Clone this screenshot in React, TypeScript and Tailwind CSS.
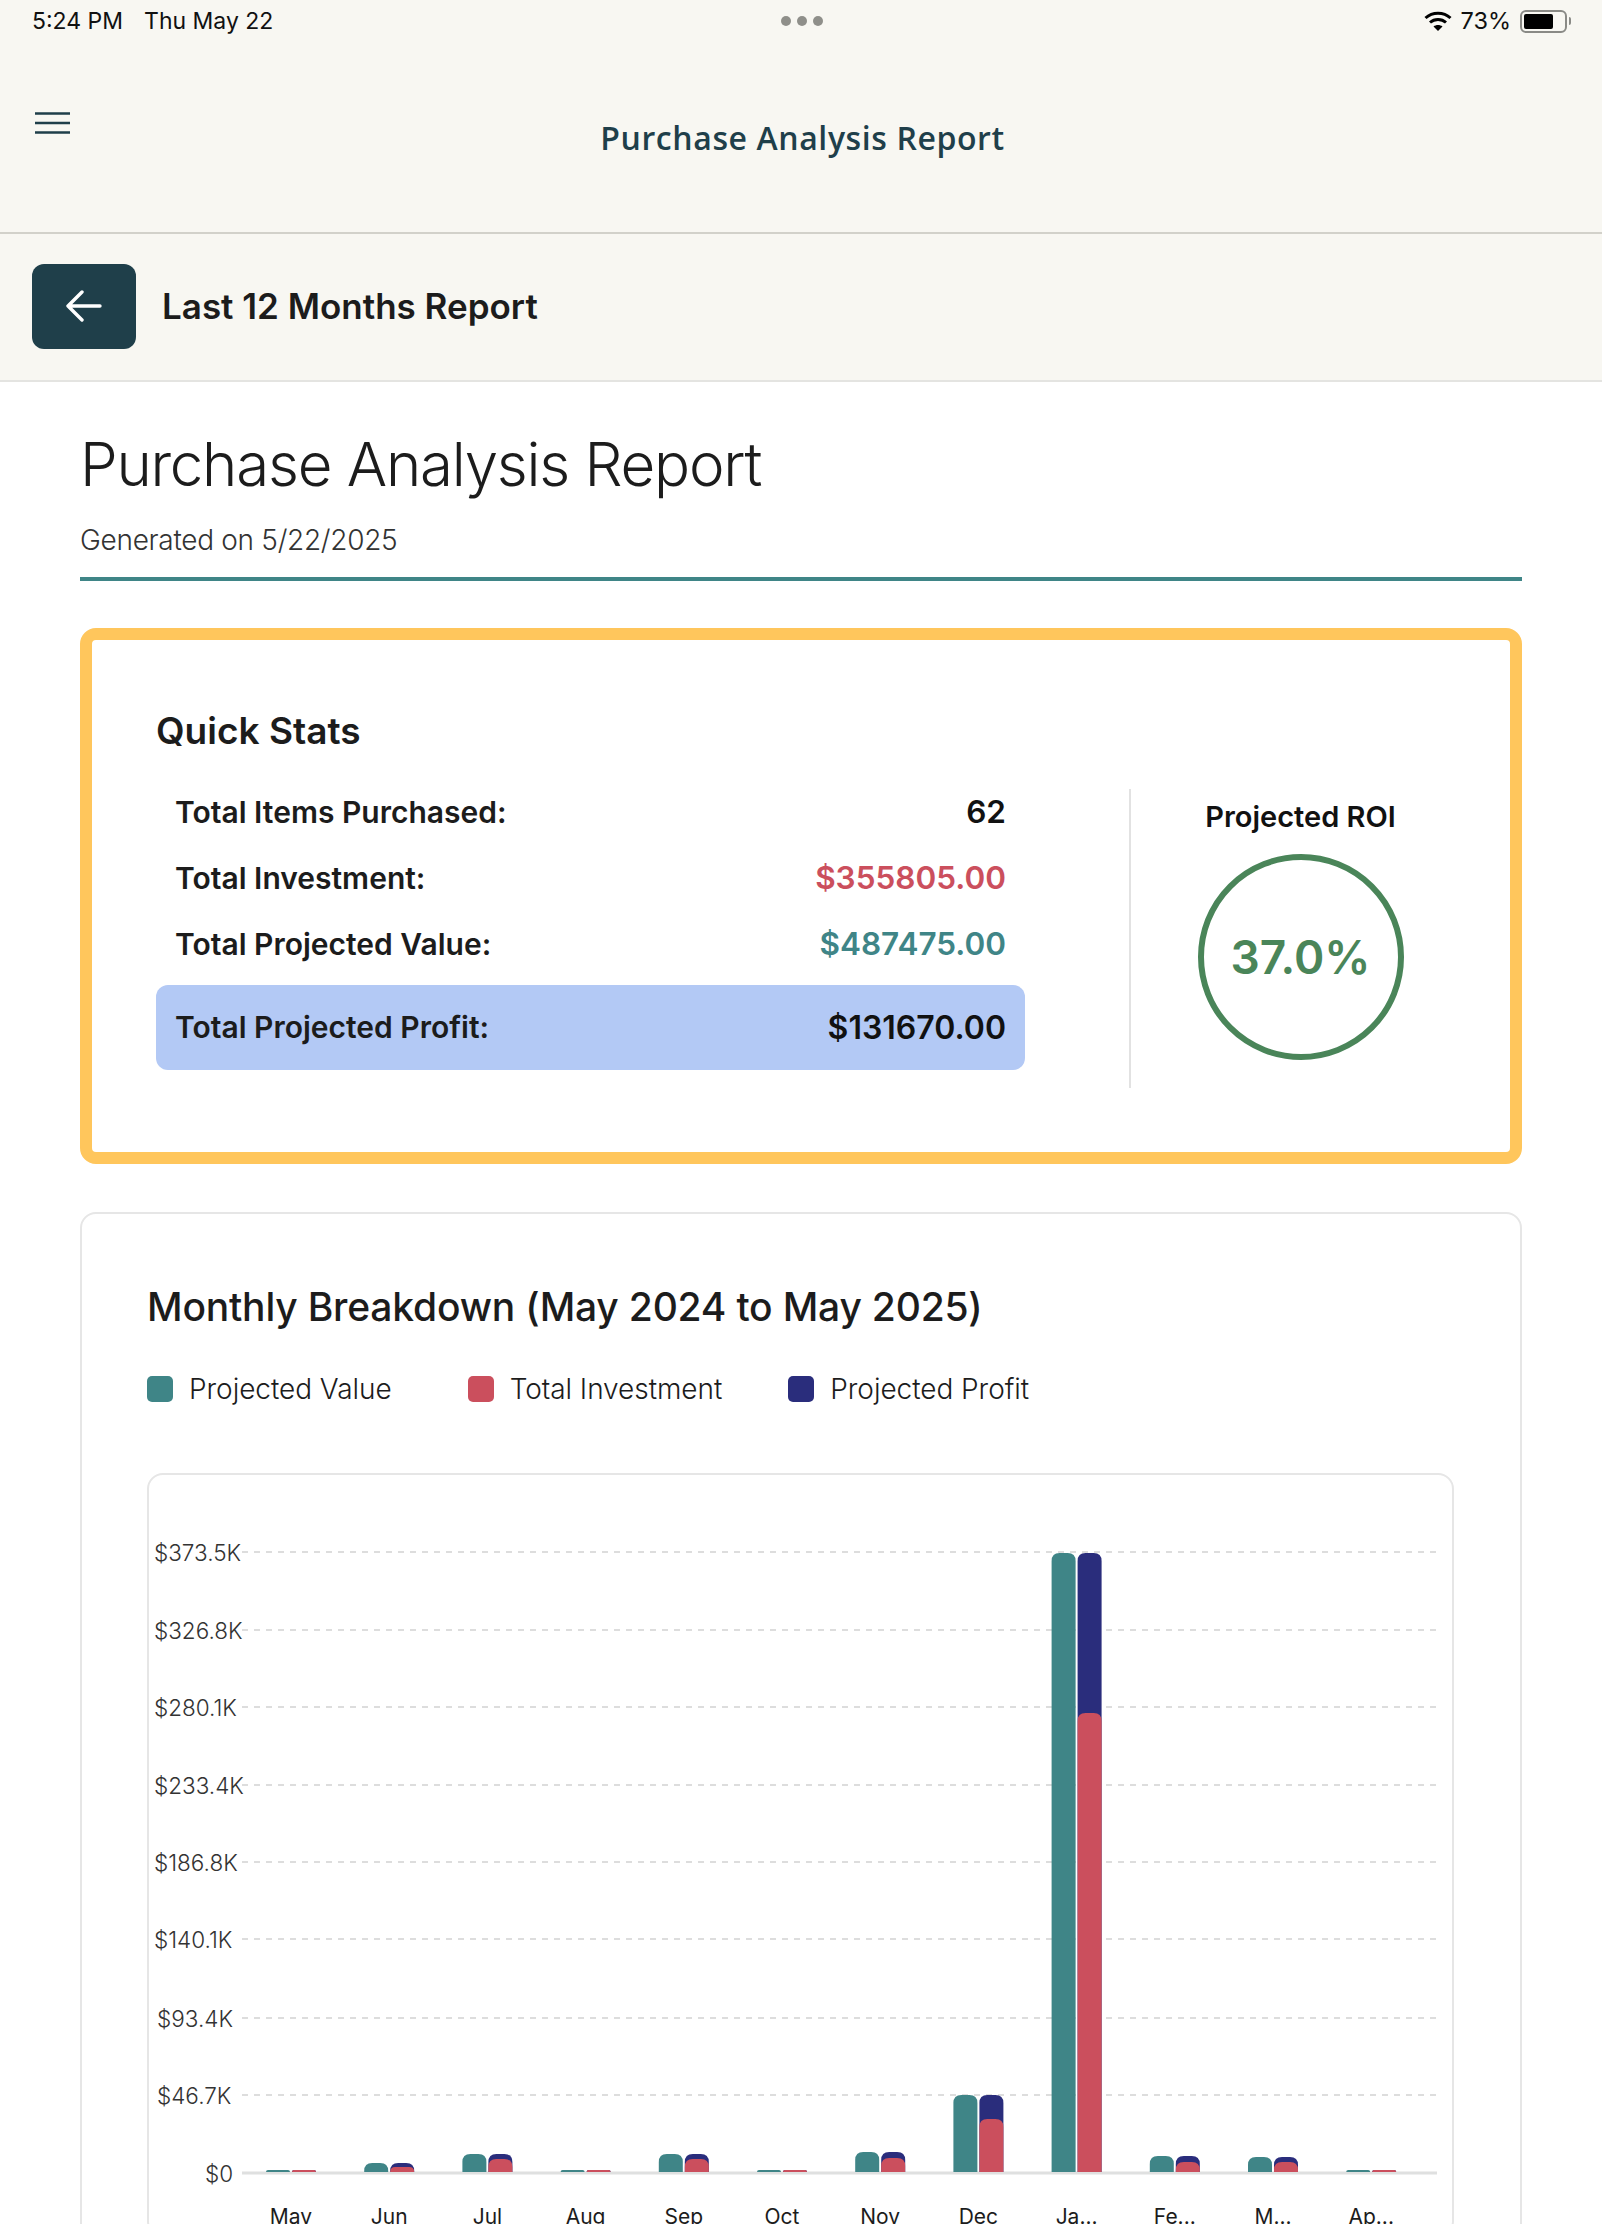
const TEAL = "#3f8587";
const RED = "#cb4f5d";
const NAVY = "#2a2d7c";

const ticks: [string, number, number][] = [
  ["$373.5K", 1552, 154],
  ["$326.8K", 1630, 154],
  ["$280.1K", 1707, 154],
  ["$233.4K", 1785, 154],
  ["$186.8K", 1862, 154],
  ["$140.1K", 1939, 154],
  ["$93.4K", 2018, 157],
  ["$46.7K", 2095, 157],
  ["$0", 2173, 205],
];

const months: { label: string; top: number; red: number }[] = [
  { label: "May", top: 2170, red: 2170 },
  { label: "Jun", top: 2163, red: 2167 },
  { label: "Jul", top: 2154, red: 2159 },
  { label: "Aug", top: 2170, red: 2170 },
  { label: "Sep", top: 2154, red: 2159 },
  { label: "Oct", top: 2170, red: 2170 },
  { label: "Nov", top: 2152, red: 2158 },
  { label: "Dec", top: 2095, red: 2119 },
  { label: "Ja...", top: 1553, red: 1713 },
  { label: "Fe...", top: 2156, red: 2162 },
  { label: "M...", top: 2157, red: 2162 },
  { label: "Ap...", top: 2170, red: 2170 },
];

const AXIS = 2172;

function barPath(x: number, top: number, w: number) {
  const h = AXIS - top;
  const r = Math.min(8, h);
  return `M${x} ${AXIS}V${top + r}Q${x} ${top} ${x + r} ${top}H${x + w - r}Q${x + w} ${top} ${x + w} ${top + r}V${AXIS}Z`;
}

function Chart() {
  return (
    <svg viewBox="149 1475 1303 760" className="block w-[1303px] h-[760px]">
      {ticks.slice(0, 8).map(([, y]) => (
        <line key={y} x1={242} x2={1437} y1={y} y2={y} stroke="#dddddd" strokeWidth={2} strokeDasharray="6 6" />
      ))}
      <line x1={242} x2={1437} y1={2173} y2={2173} stroke="#dfe0e0" strokeWidth={3} />
      {ticks.map(([t, y, x]) => (
        <text key={t} x={x} y={y + 9} fontSize={22.5} fill="#333333" fontFamily="Inter, sans-serif" fontWeight={300}>
          {t}
        </text>
      ))}
      {months.map((m, i) => {
        const c = 291 + 98.2 * i;
        return (
          <g key={m.label}>
            <path d={barPath(c - 25, m.top, 24)} fill={TEAL} />
            <path d={barPath(c + 1, m.top, 24)} fill={NAVY} />
            <path d={barPath(c + 1, m.red, 24)} fill={RED} />
            <text x={c} y={2224} fontSize={21} fill="#1c1c1c" textAnchor="middle" fontFamily="Inter, sans-serif">
              {m.label}
            </text>
          </g>
        );
      })}
    </svg>
  );
}

function Row({ label, value, color }: { label: string; value: string; color: string }) {
  return (
    <div className="flex h-[44px] items-center justify-between px-[19px]">
      <span className="text-[30px] font-semibold text-[#1c1c1c]">{label}</span>
      <span className={`text-[31.5px] font-semibold ${color}`}>{value}</span>
    </div>
  );
}

function Legend({ color, label, className }: { color: string; label: string; className?: string }) {
  return (
    <div className={`flex items-center gap-[16px] ${className ?? ""}`}>
      <span className={`h-[26px] w-[26px] rounded-[5px] ${color}`} />
      <span className="text-[28px] font-light tracking-[-0.05px] text-[#1c1c1c]">{label}</span>
    </div>
  );
}

export default function App() {
  return (
    <div className="h-[2224px] w-[1602px] overflow-hidden bg-white font-['Inter',sans-serif] text-[#1c1c1c]">
      <header className="h-[234px] border-b-2 border-[#d2d1ca] bg-[#f8f7f2]">
        <div className="grid h-[42px] grid-cols-3 items-center pl-[32px] pr-[31px]">
          <div className="flex gap-[21px] text-[23px] text-[#111111]">
            <span>5:24 PM</span>
            <span>Thu May 22</span>
          </div>
          <div className="flex justify-center gap-[6px]">
            <span className="h-[10px] w-[10px] rounded-full bg-[#8f8f8a]" />
            <span className="h-[10px] w-[10px] rounded-full bg-[#8f8f8a]" />
            <span className="h-[10px] w-[10px] rounded-full bg-[#8f8f8a]" />
          </div>
          <div className="flex items-center justify-end gap-[9px] text-[23.5px] text-[#111111]">
            <svg viewBox="0 0 28 20" className="h-[20px] w-[28px]" fill="none" stroke="#000000" strokeWidth={3}>
              <path d="M1.5 7C8.5 .5 19.5 .5 26.5 7" />
              <path d="M6 11.5C10.5 7.5 17.5 7.5 22 11.5" />
              <path d="M9.5 15.5 14 20l4.5-4.5C16 13.5 12 13.5 9.5 15.5Z" fill="#000000" stroke="none" />
            </svg>
            <span>73%</span>
            <div className="flex items-center gap-[2px]">
              <div className="flex h-[23px] w-[47px] items-center rounded-[6px] border-2 border-[#8a8a86] p-[2px]">
                <div className="h-full w-[29px] rounded-[2px] bg-black" />
              </div>
              <div className="h-[8px] w-[2px] rounded-r-full bg-[#8a8a86]" />
            </div>
          </div>
        </div>
        <div className="grid grid-cols-3 pl-[35px] pr-[32px]">
          <svg viewBox="0 0 35 22" className="mt-[70px] h-[22px] w-[35px]" stroke="#1f3f4a" strokeWidth={2.6}>
            <path d="M0 1.5H35M0 11H35M0 20.5H35" />
          </svg>
          <h1 className="mt-[73px] whitespace-nowrap text-center font-['Open_Sans',sans-serif] text-[32px] leading-[46px] font-semibold tracking-[0.6px] text-[#1f3f4a]">
            Purchase Analysis Report
          </h1>
        </div>
      </header>

      <div className="flex h-[148px] items-center gap-[26px] border-b-2 border-[#e4e4e1] bg-[#f8f7f2] pb-[2px] pl-[32px]">
        <button className="flex h-[85px] w-[104px] items-center justify-center rounded-[12px] bg-[#1f3f4a]">
          <svg viewBox="0 0 36 32" className="h-[32px] w-[36px]" fill="none" stroke="#ffffff" strokeWidth={3.4} strokeLinecap="round" strokeLinejoin="round">
            <path d="M34 16H2M16 2 2 16l14 14" />
          </svg>
        </button>
        <span className="text-[35px] font-semibold text-[#1c1c1c]">Last 12 Months Report</span>
      </div>

      <main className="px-[80px]">
        <div className="border-b-4 border-[#3f8587] pt-[46px] pb-[19px]">
          <h2 className="text-[60px] leading-[72px] font-light tracking-[-1.25px] text-[#1c1c1c]">Purchase Analysis Report</h2>
          <p className="mt-[22px] text-[28px] leading-[36px] font-light tracking-[-0.3px] text-[#333333]">Generated on 5/22/2025</p>
        </div>

        <section className="mt-[47px] h-[536px] rounded-[16px] border-[12px] border-[#ffc65c] pl-[64px]">
          <h3 className="pt-[69px] text-[37px] leading-[44px] font-semibold text-[#1c1c1c]">Quick Stats</h3>
          <div className="mt-[36px] flex h-[299px]">
            <div className="w-[869px] pt-[1px]">
              <Row label="Total Items Purchased:" value="62" color="text-[#111111]" />
              <div className="mt-[22px]">
                <Row label="Total Investment:" value="$355805.00" color="text-[#cb4f5d]" />
              </div>
              <div className="mt-[22px]">
                <Row label="Total Projected Value:" value="$487475.00" color="text-[#3f8587]" />
              </div>
              <div className="mt-[19px] flex h-[85px] items-center justify-between rounded-[12px] bg-[#b3c9f5] px-[19px]">
                <span className="text-[30px] font-semibold text-[#1c1c1c]">Total Projected Profit:</span>
                <span className="text-[32px] font-semibold text-[#111111]">$131670.00</span>
              </div>
            </div>
            <div className="ml-[104px] flex w-[341px] flex-col items-center border-l-2 border-[#e2e2e2] pt-[11px]">
              <div className="text-[29px] leading-[34px] font-semibold text-[#111111]">Projected ROI</div>
              <div className="mt-[20px] flex h-[206px] w-[206px] items-center justify-center rounded-full border-[6px] border-[#4a8559] text-[46px] font-semibold text-[#4a8559]">
                37.0%
              </div>
            </div>
          </div>
        </section>

        <section className="mt-[48px] rounded-[16px] border-2 border-[#e6e6e6] pt-[69px] pl-[65px] pr-[66px]">
          <h3 className="text-[39px] leading-[48px] font-medium tracking-[-0.2px] text-[#1c1c1c]">
            Monthly Breakdown (May 2024 to May 2025)
          </h3>
          <div className="mt-[41px] flex h-[34px] items-center">
            <Legend color="bg-[#3f8587]" label="Projected Value" />
            <Legend color="bg-[#cb4f5d]" label="Total Investment" className="ml-[76px]" />
            <Legend color="bg-[#2a2d7c]" label="Projected Profit" className="ml-[66px]" />
          </div>
          <div className="mt-[67px] rounded-[16px] border-2 border-[#e6e6e6]">
            <Chart />
          </div>
        </section>
      </main>
    </div>
  );
}
